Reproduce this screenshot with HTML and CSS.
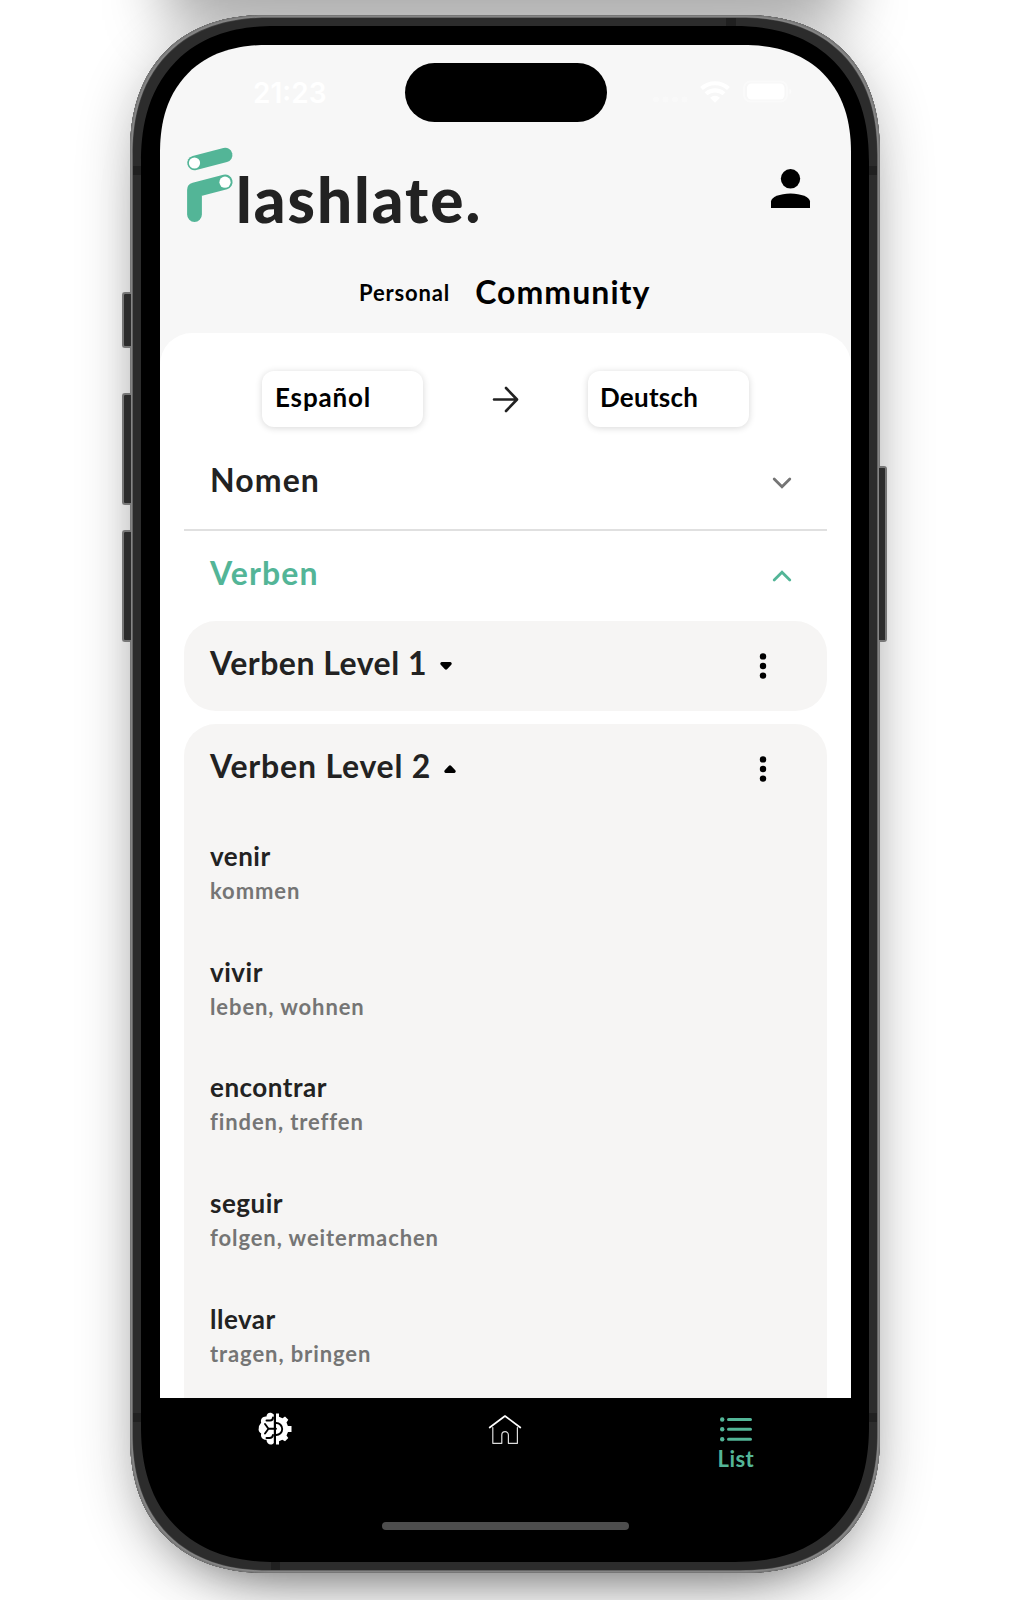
FILE: index.html
```html
<!DOCTYPE html>
<html lang="de">
<head>
<meta charset="utf-8">
<title>Flashlate</title>
<link rel="stylesheet" href="styles.css">
</head>
<body>
<main class="stage">
  <div class="phone">
    <i class="key key-action"></i><i class="key key-up"></i><i class="key key-down"></i><i class="key key-power"></i>
    <i class="band band-l1"></i><i class="band band-l2"></i><i class="band band-r1"></i><i class="band band-r2"></i><i class="band band-t"></i><i class="band band-b"></i>
    <div class="screen">
      <div class="status">
        <span class="time">21:23</span>
        <span class="island"></span>
        <svg class="signals" width="142" height="24" viewBox="0 0 142 24" fill="#fff">
          <g opacity=".3"><circle cx="4" cy="19.500" r="3"/><circle cx="13.500" cy="19.500" r="3"/><circle cx="23" cy="19.500" r="3"/><circle cx="32.500" cy="19.500" r="3"/></g>
          <g fill="none" stroke="#fff" stroke-width="4.200"><path d="M49.500 8.500a20 20 0 0 1 27 0"/><path d="M54 13.800a13.500 13.500 0 0 1 18 0"/></g>
          <path d="M58 17.800q5-4 10 0l-5 5z"/>
          <rect x="92" y="1.500" width="43" height="20" rx="6.500" fill="none" stroke="#fff" stroke-opacity=".4" stroke-width="2"/>
          <rect x="95" y="3.500" width="37.500" height="16" rx="4.500"/><path opacity=".5" d="M137.500 8.500q4 3 0 6z"/>
        </svg>
      </div>
      <header class="brand">
        <div class="logo">
          <svg class="mark" width="46" height="76" viewBox="0 0 46 76">
            <path d="M7.500 16 38.200 8" stroke="#53b597" stroke-width="14.500" stroke-linecap="round"/>
            <path d="M7.500 67.500V43L38.200 35" fill="none" stroke="#53b597" stroke-width="14.800" stroke-linecap="round" stroke-linejoin="round"/>
            <circle cx="7.500" cy="16" r="5.600" fill="#fff"/><circle cx="38" cy="35.200" r="5.600" fill="#fff"/>
          </svg>
          <span class="wordmark">lashlate.</span>
        </div>
        <svg class="user" width="39" height="39" viewBox="0 0 39 39"><circle cx="19.500" cy="9.800" r="9.700"/><path d="M0 39v-6.500C0 28 9 24.400 19.500 24.400S39 28 39 32.500V39z"/></svg>
      </header>
      <nav class="scopes"><span class="scope">Personal</span><span class="scope scope-active">Community</span></nav>
      <section class="sheet">
        <div class="languages">
          <div class="select select-from">Español</div>
          <svg width="27" height="27" viewBox="0 0 27 27" fill="none" stroke="#222" stroke-width="2.600" stroke-linecap="round" stroke-linejoin="round"><path d="M2 13.500h22.500M14 2l11 11.500L14 25"/></svg>
          <div class="select">Deutsch</div>
        </div>
        <div class="group"><h2 class="title">Nomen</h2>
          <svg width="20" height="14" viewBox="0 0 20 14" fill="none" stroke="#757575" stroke-width="2.800" stroke-linecap="round"><path d="m2.200 3 7.800 7.800L17.800 3"/></svg></div>
        <div class="group group-open"><h2 class="title">Verben</h2>
          <svg width="20" height="14" viewBox="0 0 20 14" fill="none" stroke="#53b597" stroke-width="2.800" stroke-linecap="round"><path d="M2.200 11 10 3.200l7.800 7.800"/></svg></div>
        <article class="card">
          <div class="card-head"><h3 class="title level">Verben Level 1</h3>
            <svg class="caret" width="12" height="8" viewBox="0 0 12 8"><path d="M1.500 0h9Q12.500.6 11.500 2.400L7.300 7Q6 8.500 4.700 7L.5 2.400Q-.5.6 1.500 0z"/></svg>
            <svg class="more" width="8" height="28" viewBox="0 0 8 28"><circle cx="4" cy="4.400" r="3.200"/><circle cx="4" cy="14" r="3.200"/><circle cx="4" cy="23.600" r="3.200"/></svg></div>
        </article>
        <article class="card card-open">
          <div class="card-head"><h3 class="title level">Verben Level 2</h3>
            <svg class="caret" width="12" height="8" viewBox="0 0 12 8"><path d="M1.500 8h9Q12.500 7.400 11.500 5.600L7.300 1Q6-.5 4.700 1L.5 5.600Q-.5 7.400 1.500 8z"/></svg>
            <svg class="more" width="8" height="28" viewBox="0 0 8 28"><circle cx="4" cy="4.400" r="3.200"/><circle cx="4" cy="14" r="3.200"/><circle cx="4" cy="23.600" r="3.200"/></svg></div>
          <dl class="words">
            <div class="word"><dt>venir</dt><dd>kommen</dd></div>
            <div class="word"><dt>vivir</dt><dd>leben, wohnen</dd></div>
            <div class="word"><dt>encontrar</dt><dd>finden, treffen</dd></div>
            <div class="word"><dt>seguir</dt><dd>folgen, weitermachen</dd></div>
            <div class="word"><dt>llevar</dt><dd>tragen, bringen</dd></div>
          </dl>
        </article>
      </section>
      <footer class="tabs">
        <div class="tab"><svg width="34" height="34" viewBox="0 0 34 34">
          <path fill="#fff" d="M15.800 2.500C13-.5 8.500.5 8.500 4.500 5 4 2 7 3.200 10.500 2.500 12 .5 13.500.8 16c-.8 2.500.5 4.500 2.400 5.500-1 3.500 1.500 6.500 5.300 6.300 0 4.500 4.800 6.200 7.300 3.200z"/>
          <path fill="#fff" d="M18 1.500h3v3.200l3.500 1.500 2.500-1.700 3.300 3.300-1.800 2.700 1.400 3.500H33.500v6H30l-1.500 3.500 1.800 2.500-3.300 3.300-2.700-1.600-3.300 1.500V32.500H18z"/>
          <path fill="none" stroke="#000" stroke-width="1.900" stroke-linecap="round" d="M18.200 11a6 6 0 0 1 0 12M7 12l3.500 4.700h7.500M7 21.500l3.500-4.800M8.500 8.500h3.500q3 0 3-3M8.500 26h3q3 0 3.500-3"/>
        </svg></div>
        <div class="tab"><svg width="34" height="34" viewBox="0 0 34 34" fill="none" stroke="#fff" stroke-linecap="round" stroke-linejoin="round"><path stroke-width="1.700" d="M1.700 15.500 17 4l15.300 11.500"/><path stroke="#ddd" stroke-width="1.200" d="M4.800 15.500v15.800h9V23a3.300 3.300 0 0 1 6.600 0v8.300h9V15.500"/></svg></div>
        <div class="tab tab-active"><svg width="34" height="34" viewBox="0 0 34 34" stroke="#53b597" stroke-width="3" stroke-linecap="round"><path d="M9.500 7.500h22M9.500 17.300h22M9.500 27.300h22"/><g fill="#53b597" stroke="none"><circle cx="3.200" cy="7.500" r="2.200"/><circle cx="3.200" cy="17.300" r="2.200"/><circle cx="3.200" cy="27.300" r="2.200"/></g></svg><span>List</span></div>
        <i class="home-bar"></i>
      </footer>
    </div>
  </div>
</main>
</body>
</html>
```
FILE: styles.css
```css
* { box-sizing: border-box; }
body, h2, h3, dl, dd { margin: 0; }
body { background: #fff; }
svg { display: block; flex: none; overflow: visible; }

.stage {
  position: relative;
  width: 1010px;
  height: 1600px;
  padding: 15px 0 0 130px;
  overflow: hidden;
  font-family: Lato, "Liberation Sans", sans-serif;
  font-weight: 700;
  color: #222;
}
/* soft shade cast from above the device */
.stage::before {
  content: "";
  position: absolute;
  left: 185px;
  top: -60px;
  width: 640px;
  height: 40px;
  box-shadow: 0 20px 60px 20px rgba(0, 0, 0, .36);
}

/* device */
.phone {
  position: relative;
  width: 750px;
  height: 1558px;
  padding: 30px 29px 30px 30px;
  border-radius: 122px;
  background: #000;
  box-shadow: inset 0 0 0 1px #777, inset 0 0 0 2.500px #858585, inset 0 0 0 3px #444, inset 0 0 0 11px #2c2c2c,
    0 12px 55px rgba(0, 0, 0, .24), 0 30px 50px -30px rgba(0, 0, 0, .5);
}
.key {
  position: absolute;
  left: -8px;
  width: 9px;
  background: #2c2c2c;
  border: 2px solid #777;
  border-right: 0;
  border-radius: 3px 0 0 3px;
}
.key-action { top: 277px; height: 56px; }
.key-up { top: 378px; height: 112px; }
.key-down { top: 515px; height: 112px; }
.key-power { left: 749px; top: 451px; width: 8px; height: 176px; border: 2px solid #777; border-left: 0; border-radius: 0 3px 3px 0; }
.band { position: absolute; background: #202020; width: 8px; height: 9px; }
.band-l1, .band-l2 { left: 3px; }
.band-r1, .band-r2 { right: 3px; }
.band-l1, .band-r1 { top: 151px; }
.band-l2, .band-r2 { top: 1398px; }
.band-t { left: 596px; top: 3px; width: 10px; height: 8px; }
.band-b { left: 141px; bottom: 3px; width: 9px; height: 8px; }

.screen {
  display: flex;
  flex-direction: column;
  height: 1498px;
  border-radius: 94px;
  overflow: hidden;
  background: linear-gradient(#f7f7f7 50%, #000 50%);
}
@supports (corner-shape: superellipse(1.2)) {
  .phone { border-radius: 138px; corner-shape: superellipse(1.2); }
  .screen { border-radius: 108px; corner-shape: superellipse(1.2); }
}
.status {
  display: grid;
  grid-template-columns: 244.700px 202px 1fr;
  height: 95px;
  padding-top: 18px;
}
.time {
  padding: 11px 0 0 93px;
  font: 600 28px/38px Inter, sans-serif;
  color: #fff;
}
.island { height: 59px; border-radius: 30px; background: #000; }
.signals { margin: 17px 0 0 45px; }

.brand {
  display: flex;
  justify-content: space-between;
  height: 120px;
  padding: 7px 41px 0 27px;
}
.logo { display: flex; }
.wordmark {
  margin: 14px 0 0 3px;
  font-size: 62px;
  font-weight: 900;
  line-height: 76px;
  letter-spacing: 2px;
}
.user { margin-top: 22px; }

.scopes {
  display: flex;
  height: 73px;
  padding: 13px 0 0 199px;
  gap: 25px;
  color: #000;
}
.scope { font-size: 22px; line-height: 40px; letter-spacing: .85px; }
.scope-active { font-size: 32px; line-height: 38px; letter-spacing: 1.050px; }

.sheet {
  height: 1065px;
  padding: 38px 24px 0;
  border-radius: 32px 32px 0 0;
  background: #fff;
  overflow: hidden;
}
.languages {
  display: flex;
  align-items: center;
  justify-content: space-between;
  height: 56px;
  padding: 0 78px;
}
.select {
  width: 161px;
  height: 56px;
  padding-left: 12px;
  border-radius: 12px;
  box-shadow: 0 1px 7px rgba(0, 0, 0, .16);
  color: #000;
  font-size: 26px;
  line-height: 53px;
  letter-spacing: .25px;
}
.select-from { padding-left: 13px; letter-spacing: .85px; }
.group {
  display: flex;
  align-items: center;
  justify-content: space-between;
  height: 104px;
  padding: 9px 35px 0 26px;
  border-bottom: 2px solid #e0e0e0;
}
.title { font-size: 32px; line-height: 38px; font-weight: 700; letter-spacing: 1.100px; }
.group .title { margin-top: -6px; }
.group-open { height: 90px; padding-top: 0; border: 0; color: #53b597; }

.card {
  height: 90px;
  margin-bottom: 13px;
  border-radius: 32px;
  background: #f6f5f4;
}
.card-head { display: flex; align-items: center; height: 90px; padding: 0 60px 0 26px; }
.card-head .title { margin-top: -6px; letter-spacing: .5px; }
.caret { margin-left: 13px; }
.more { margin-left: auto; }
.card-open { height: 720px; border-radius: 32px 32px 0 0; }
.card-open .card-head .title { letter-spacing: .8px; }
.words { padding: 25px 0 0 26px; }
.word { height: 115.650px; }
dt { font-size: 26px; line-height: 34px; letter-spacing: .5px; }
dd { font-size: 22px; line-height: 35px; letter-spacing: .9px; color: #757575; }

.tabs {
  position: relative;
  display: grid;
  grid-template-columns: repeat(3, 1fr);
  height: 145px;
  flex: none;
  background: #000;
}
.tab { display: flex; flex-direction: column; align-items: center; padding-top: 14px; }
.tab-active { color: #53b597; font-size: 22px; line-height: 26px; letter-spacing: .4px; }
.home-bar {
  position: absolute;
  left: 222px;
  top: 124px;
  width: 247px;
  height: 8px;
  border-radius: 4px;
  background: #4d4d4d;
}
```
